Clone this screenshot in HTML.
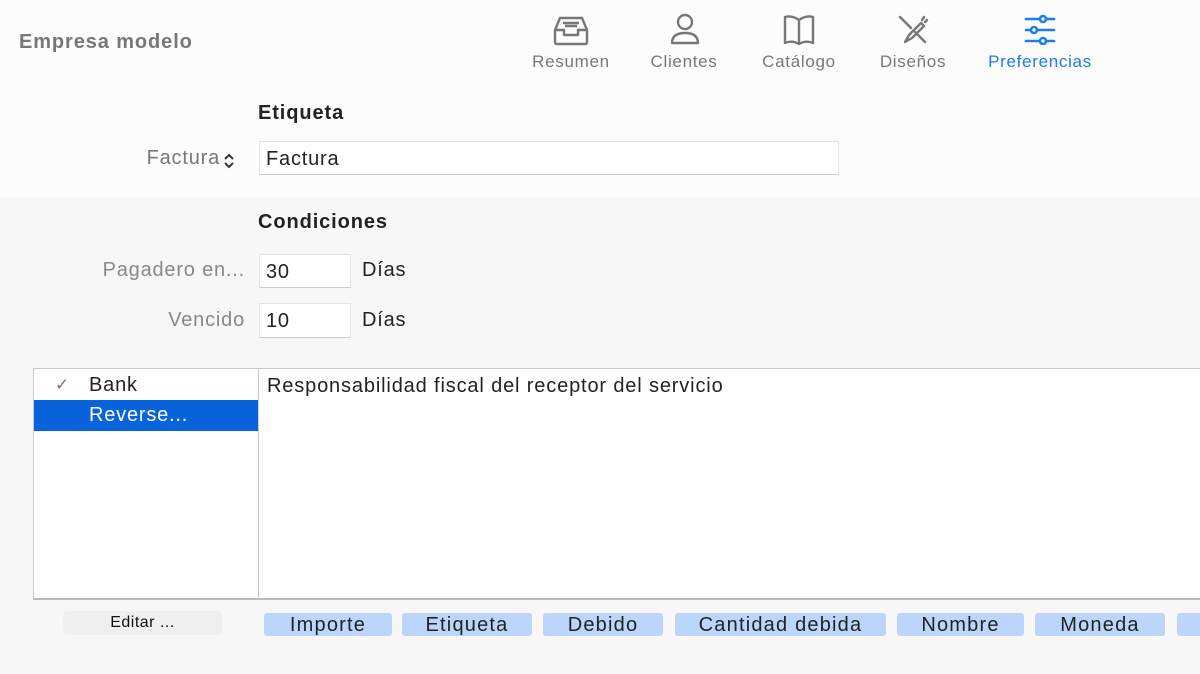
<!DOCTYPE html>
<html><head><meta charset="utf-8"><style>
*{margin:0;padding:0;box-sizing:border-box}
body{width:1200px;height:674px;overflow:hidden;background:#f7f7f7;font-family:"Liberation Sans",sans-serif;position:relative;color:#222}
.a{position:absolute}
.t{font-size:20px;letter-spacing:0.8px}
.top{left:0;top:0;width:1200px;height:197px;background:#fcfcfc}
.nav{text-align:center;font-size:17px;letter-spacing:0.7px;color:#777;top:52px;width:130px}
.inp{background:#fff;border:1px solid #e4e4e4;border-bottom-color:#ccc;font-size:20px;letter-spacing:0.8px;padding:6px 6px 0;color:#222}
.tag{top:613px;height:23px;background:#bcd6fb;border-radius:3px;font-size:20px;letter-spacing:1.2px;text-align:center;line-height:25px;color:#222}
</style></head><body>
<div class="a top"></div>
<div class="a" style="left:19px;top:31px;font-size:20px;letter-spacing:0.9px;font-weight:bold;color:#777">Empresa modelo</div>

<svg class="a" style="left:553px;top:14px" width="36" height="32" viewBox="0 0 36 32" fill="none" stroke="#777" stroke-width="2.4" stroke-linejoin="round"><path d="M2 16 L7 4 H29 L34 16 V28 Q34 30 32 30 H4 Q2 30 2 28 Z"/><path d="M2 16 H11 V21 H25 V16 H34"/><path d="M10 9 H26 M12 12 H24"/></svg>
<div class="a nav" style="left:506px">Resumen</div>
<svg class="a" style="left:670px;top:13px" width="30" height="32" viewBox="0 0 30 32" fill="none" stroke="#777" stroke-width="2.4"><circle cx="15" cy="9" r="7"/><path d="M2 30 Q2 20 15 20 Q28 20 28 30 Z" stroke-linejoin="round"/></svg>
<div class="a nav" style="left:619px">Clientes</div>
<svg class="a" style="left:782px;top:14px" width="34" height="32" viewBox="0 0 34 32" fill="none" stroke="#777" stroke-width="2.4" stroke-linejoin="round"><path d="M17 6 Q10 1 3 3 V29 Q10 26 17 30 Q24 26 31 29 V3 Q24 1 17 6 Z M17 6 V30"/></svg>
<div class="a nav" style="left:734px">Catálogo</div>
<svg class="a" style="left:897px;top:14px" width="32" height="32" viewBox="0 0 32 32" fill="none" stroke="#777" stroke-width="2.4" stroke-linecap="round" stroke-linejoin="round"><path d="M3 3 L14 14"/><path d="M18 18 L28 28"/><path d="M24 9 L12 21 L8 28 L15 24 L27 12 Z"/><path d="M27 3 L25 6 M30 6 L28 8"/></svg>
<div class="a nav" style="left:848px">Diseños</div>
<svg class="a" style="left:1024px;top:15px" width="32" height="30" viewBox="0 0 32 30" fill="none" stroke="#1a7cf6" stroke-width="2.6" stroke-linecap="round"><path d="M2 4 H30 M2 15 H30 M2 26 H30"/><circle cx="19" cy="4" r="3" fill="#fff"/><circle cx="10" cy="15" r="3" fill="#fff"/><circle cx="19" cy="26" r="3" fill="#fff"/></svg>
<div class="a nav" style="left:975px;color:#1a7cf6">Preferencias</div>

<div class="a" style="left:258px;top:102px;font-size:20px;letter-spacing:0.9px;font-weight:bold">Etiqueta</div>
<div class="a t" style="left:60px;top:147px;width:160px;text-align:right;color:#777">Factura</div>
<svg class="a" style="left:222px;top:151px" width="14" height="20" viewBox="0 0 14 20" fill="none" stroke="#333" stroke-width="2"><path d="M3 8 L7 4 L11 8 M3 12 L7 16 L11 12"/></svg>
<div class="a inp" style="left:259px;top:141px;width:580px;height:34px">Factura</div>

<div class="a" style="left:258px;top:211px;font-size:20px;letter-spacing:0.9px;font-weight:bold">Condiciones</div>
<div class="a t" style="left:40px;top:259px;width:205px;text-align:right;color:#888">Pagadero en...</div>
<div class="a inp" style="left:259px;top:254px;width:92px;height:34px">30</div>
<div class="a t" style="left:362px;top:259px">Días</div>
<div class="a t" style="left:40px;top:309px;width:205px;text-align:right;color:#888">Vencido</div>
<div class="a inp" style="left:259px;top:303px;width:92px;height:35px">10</div>
<div class="a t" style="left:362px;top:309px">Días</div>

<div class="a" style="left:33px;top:368px;width:1170px;height:232px;background:#fff;border:1px solid #c8c8c8;border-bottom:2px solid #bbb"></div>
<div class="a" style="left:258px;top:369px;width:1px;height:230px;background:#c8c8c8"></div>
<div class="a" style="left:55px;top:375px;font-size:17px;color:#777">✓</div>
<div class="a t" style="left:89px;top:374px">Bank</div>
<div class="a" style="left:34px;top:400px;width:224px;height:31px;background:#0964dc"></div>
<div class="a t" style="left:89px;top:404px;color:#fff">Reverse...</div>
<div class="a t" style="left:267px;top:375px;letter-spacing:0.85px">Responsabilidad fiscal del receptor del servicio</div>

<div class="a" style="left:63px;top:611px;width:159px;height:24px;background:#efefef;border-radius:5px;font-size:16px;letter-spacing:0.5px;text-align:center;line-height:23px;color:#111">Editar ...</div>
<div class="a tag" style="left:264px;width:128px">Importe</div>
<div class="a tag" style="left:402px;width:130px">Etiqueta</div>
<div class="a tag" style="left:543px;width:120px">Debido</div>
<div class="a tag" style="left:675px;width:211px">Cantidad debida</div>
<div class="a tag" style="left:897px;width:127px">Nombre</div>
<div class="a tag" style="left:1035px;width:130px">Moneda</div>
<div class="a tag" style="left:1177px;width:60px"></div>
</body></html>
